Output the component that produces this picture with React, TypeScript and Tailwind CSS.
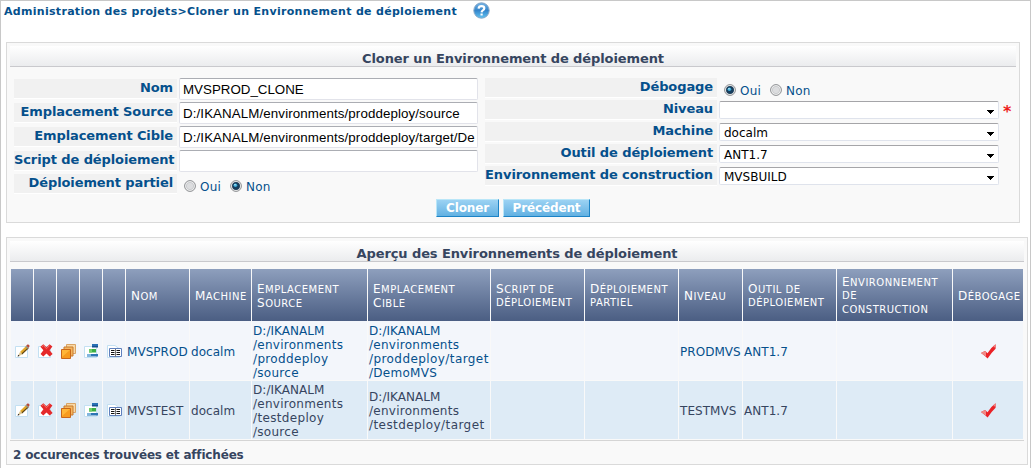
import React from "react";

type P = { children?: React.ReactNode; className?: string };

const Title = ({ children, className = "" }: P) => (
  <div className="h-[21px] border-b border-[#c9c9cd] bg-linear-to-b from-white to-[#ebecee] text-center text-[13px] leading-[25px] font-bold tracking-[-0.1px] text-[#36455f] whitespace-nowrap">
    <span className={className}>{children}</span>
  </div>
);

const Label = ({ children, className = "" }: P) => (
  <div className="h-5 shrink-0 border-b border-white bg-[#f1f1f1] pr-1 text-right text-[13px] leading-[17px] font-bold tracking-[-0.1px] text-[#05508c] whitespace-nowrap">
    <span className={className}>{children}</span>
  </div>
);

const Field = ({ children, className = "" }: P) => (
  <div className="h-[22px] w-[299px] shrink-0 overflow-hidden rounded-[2px] border border-[#e2e3ea] border-t-[#abadb3] bg-white pl-[3px] font-['Liberation_Sans',Arial,sans-serif] text-[13.33px] leading-[21px] text-black whitespace-nowrap">
    <span className={className}>{children}</span>
  </div>
);

const Select = ({ children, className = "" }: P) => (
  <div className="flex h-[18px] w-[280px] shrink-0 items-start justify-between rounded-[2px] border border-[#dfe3ec] border-t-[#a5a5a8] bg-white pl-1 text-[12px] leading-[18px] text-black whitespace-nowrap">
    <span className={className}>{children}</span>
    <svg width="7" height="4" className="mt-[8px] mr-[4px]" shapeRendering="crispEdges">
      <path d="M0 0H7V1H6V2H5V3H4V4H3V3H2V2H1V1H0Z" fill="#000" />
    </svg>
  </div>
);

const Radio = ({ on = false }: { on?: boolean }) => (
  <svg width="12" height="12" viewBox="0 0 12 12" className="shrink-0">
    <circle cx="6" cy="6" r="5.4" fill="#f6f6f6" stroke="#8b8d90" strokeWidth="1" />
    <circle cx="6" cy="6" r="3.7" fill={on ? "#173f5f" : "#dcdddf"} stroke={on ? "#12324c" : "#bfc1c4"} strokeWidth=".7" />
    {on && <circle cx="5.4" cy="5.2" r="1.8" fill="#3fb0dd" />}
    {on && <circle cx="5" cy="4.7" r=".8" fill="#c2eefa" />}
  </svg>
);

const Radios = ({ first }: { first: boolean }) => (
  <div className="flex items-center text-[12px] leading-[14px] tracking-[0.2px] text-[#05508c]">
    <Radio on={first} />
    <span className="mt-[3px] ml-1 w-[30px]">Oui</span>
    <Radio on={!first} />
    <span className="mt-[3px] ml-1">Non</span>
  </div>
);

const Button = ({ children, className = "" }: P) => (
  <button className={"h-[18px] border border-t-[#b9e6f8] border-r-[#1c83c6] border-b-[#1c83c6] border-l-[#b9e6f8] bg-linear-to-b from-[#9bd2f3] to-[#62b1e2] text-center text-[12px] leading-[17px] font-bold tracking-[-0.15px] text-white whitespace-nowrap " + className}>
    {children}
  </button>
);

const Page = () => <path d="M.5 2.5H12.5V13.5H.5Z" fill="#fff" stroke="#c3e0f2" />;

const icons = [
  <svg key="edit" width="15" height="15">
    <Page />
    <path d="M5 8L11.4 1.8L13.4 3.8L7 10Z" fill="#e3a92b" />
    <path d="M6.4 9.6L13 3.4L13.6 4.4L7.2 10.6Z" fill="#624610" />
    <path d="M11.2 1.8L12.4 .6Q13.6 .2 14.4 1.2L14.4 2.8L13.2 4Z" fill="#b8493a" />
    <path d="M10.4 2.7L11.4 1.8L13.4 3.8L12.4 4.7Z" fill="#8f9390" />
    <path d="M5 8L7.2 10.4L2.8 12.4Z" fill="#ddc590" />
    <path d="M2.6 12.6L3.2 10.8L4.6 12Z" fill="#222" />
  </svg>,
  <svg key="delete" width="15" height="15">
    <Page />
    <path d="M2.4 2.8L5.3 .2L8.5 3.2L11.6 .2L14.4 2.6L11.6 6.2L14.6 10L11.6 12.6L8.5 9.4L5.3 12.6L2.6 10L5.4 6.3Z" fill="#e5292a" />
    <path d="M3.8 2.8L5.4 1.6L8.5 4.7L11.5 1.6" fill="none" stroke="#f4766c" />
  </svg>,
  <svg key="clone" width="15" height="15">
    <path d="M5.5 .5H14.5V9.5H5.5Z" fill="#f9d9a6" stroke="#d9a566" />
    <path d="M3 3H12V12H3Z" fill="#f5b660" stroke="#c67a30" />
    <path d="M.5 5.5H9.5V14.5H.5Z" fill="#f79b1e" stroke="#c9671a" />
    <path d="M1 6H9L1 13Z" fill="#ffb638" />
  </svg>,
  <svg key="params" width="15" height="15">
    <Page />
    <path d="M8 0H14V3H8Z" fill="#2870b5" />
    <path d="M8 2H14V3.5H8Z" fill="#174f91" />
    <path d="M5 5H12V8.5H5Z" fill="#3aae45" />
    <path d="M5 5H8V8.5H5Z" fill="#71cd69" />
    <path d="M3 10H14V12.5H3Z" fill="#2c75b4" />
    <path d="M3 10H7V12.5H3Z" fill="#80b6df" />
  </svg>,
  <svg key="history" width="15" height="15">
    <path d="M.5 1.5H8L12.5 5V13.5H.5Z" fill="#fff" stroke="#c3e0f2" />
    <path d="M2.5 4.5H14.5V12.5H2.5Z" fill="#fff" stroke="#5f80bd" />
    <path d="M4 6.5H7.5M4 8.5H7.5M4 10.5H7.5M9.5 6.5H13M9.5 8.5H13M9.5 10.5H13" stroke="#111" />
    <path d="M8.5 5V13" stroke="#777" />
  </svg>,
];

const Check = () => (
  <svg width="15" height="15" viewBox="0 0 15 15">
    <path d="M0 9L4 7L6.5 9.2Q9.5 4 14.6 .3V4.8Q10.5 8.6 6.6 14.6Q3.5 11.4 0 9Z" fill="#ea2227" />
    <path d="M0 9L4 7L5 8V12.8Q2.5 10.6 0 9Z" fill="#f08a86" />
    <path d="M12.6 1.8L14.6 .3V3L12.8 3.6Z" fill="#ef8583" />
  </svg>
);

const columns = "grid grid-cols-[22px_22px_22px_22px_22px_63px_61px_115px_122px_93px_93px_63px_93px_115px_70px] gap-x-px";

const headers: [string, string?][][] = [
  [["Nom"]],
  [["Machine"]],
  [["Emplacement"], ["Source"]],
  [["Emplacement"], ["Cible"]],
  [["Script de"], ["déploiement", "small"]],
  [["Déploiement"], ["partiel", "small"]],
  [["Niveau"]],
  [["Outil de"], ["déploiement", "small"]],
  [["Environnement"], ["de", "small"], ["construction", "small"]],
  [["Débogage"]],
];

const rows = [
  {
    style: "h-[59px] text-[#05508c]",
    cell: "bg-[#f3f6fb]",
    pad: "pt-[3px]",
    iconPad: "pt-[2px]",
    data: [["MVSPROD"], ["docalm"], ["D:/IKANALM", "/environments", "/proddeploy", "/source"], ["D:/IKANALM", "/environments", "/proddeploy/target", "/DemoMVS"], [], [], ["PRODMVS"], ["ANT1.7"], []],
  },
  {
    style: "mt-px h-[58px] text-[#36455f]",
    cell: "bg-[#deebf6]",
    pad: "pt-[2px]",
    iconPad: "pt-px",
    data: [["MVSTEST"], ["docalm"], ["D:/IKANALM", "/environments", "/testdeploy", "/source"], ["D:/IKANALM", "/environments", "/testdeploy/target"], [], [], ["TESTMVS"], ["ANT1.7"], []],
  },
];

const tracking = (line: string) =>
  line.endsWith("/target") ? "tracking-[0.42px]" : line === "/proddeploy" || line === "/testdeploy" ? "tracking-[0.34px]" : line.startsWith("/") ? "tracking-[0.27px]" : "tracking-[0.05px]";

export default function App() {
  return (
    <div className="h-[468px] w-[1031px] overflow-hidden border-t border-r border-l border-[#c8c8c8] bg-white pl-[5px] font-['DejaVu_Sans',Verdana,sans-serif]">
      <div className="-ml-0.5 flex h-[41px] items-start text-[11px] font-bold text-[#05508c] whitespace-nowrap">
        <span className="w-[469px] leading-[22px] tracking-[0.3px]">Administration des projets&gt;Cloner un Environnement de déploiement</span>
        <svg width="17" height="17" viewBox="0 0 17 17" className="mt-px">
          <defs>
            <linearGradient id="help" x1="0" y1="0" x2="0" y2="1">
              <stop offset="0" stopColor="#75b4e6" />
              <stop offset=".5" stopColor="#3485cb" />
              <stop offset="1" stopColor="#62c4f2" />
            </linearGradient>
          </defs>
          <circle cx="8.5" cy="8.5" r="7.7" fill="url(#help)" stroke="#84a5c6" />
          <path d="M5.6 6.6Q5.8 4.2 8.5 4.2Q11.3 4.2 11.3 6.3Q11.3 7.5 9.8 8.4Q8.7 9 8.6 10.3M8.6 11.5V13.5" fill="none" stroke="#fff" strokeWidth="2.2" />
        </svg>
      </div>

      <div className="h-[181px] w-[1014px] border border-[#dadada] bg-[#f9f9f9] p-[3px]">
        <Title>Cloner un Environnement de déploiement</Title>
        <div className="flex pl-1">
          <div className="grid h-[129px] grid-cols-[163px_299px] content-start gap-x-[2px] pt-[11px]">
            <div className="flex flex-col gap-1 pt-px">
              <Label>Nom</Label>
              <Label>Emplacement Source</Label>
              <Label>Emplacement Cible</Label>
              <Label>Script de déploiement</Label>
              <div className="-mt-px"><Label>Déploiement partiel</Label></div>
            </div>
            <div className="flex flex-col gap-0.5">
              <Field>MVSPROD_CLONE</Field>
              <Field className="tracking-[0.1px]">D:/IKANALM/environments/proddeploy/source</Field>
              <Field className="tracking-[0.1px]">D:/IKANALM/environments/proddeploy/target/De</Field>
              <Field />
              <div className="pt-[3px] pl-[5px]"><Radios first={false} /></div>
            </div>
          </div>
          <div className="ml-[7px] grid grid-cols-[232px_280px_20px] content-start gap-x-[2px] pt-[11px]">
            <div className="flex flex-col gap-0.5">
              <Label>Débogage</Label>
              <Label>Niveau</Label>
              <Label>Machine</Label>
              <Label>Outil de déploiement</Label>
              <Label>Environnement de construction</Label>
            </div>
            <div className="flex flex-col gap-1">
              <div className="h-[19px] pt-[3px] pl-[5px]"><Radios first /></div>
              <Select />
              <Select>docalm</Select>
              <Select>ANT1.7</Select>
              <Select>MVSBUILD</Select>
            </div>
            <div className="pt-[24px] pl-[2px] text-[16px] leading-[20px] font-bold text-[#ee1c1c]">*</div>
          </div>
        </div>
        <div className="mt-[3px] flex gap-1 pl-[426px]">
          <Button className="w-[63px]">Cloner</Button>
          <Button className="w-[87px]">Précédent</Button>
        </div>
      </div>

      <div className="mt-[14px] h-[228px] w-[1022px] border border-[#dadada] bg-[#f9f9f9] p-[3px] text-[12px] leading-[14px]">
        <Title>Aperçu des Environnements de déploiement</Title>
        <div className="mt-[7px] border-b border-[#d5d5d5] px-px pb-px">
          <div className={columns + " h-[52px] text-white"}>
            {icons.map((_, i) => (
              <div key={i} className="bg-linear-to-b from-[#8e9fbd] to-[#4b5e83]" />
            ))}
            {headers.map((lines, i) => (
              <div key={i} className="flex flex-col justify-center bg-linear-to-b from-[#8e9fbd] to-[#4b5e83] pt-px pl-[5px] whitespace-nowrap">
                {lines.map(([text, small]) => (
                  <div key={text} className={"h-[14px] text-[10px] leading-[14px] tracking-[0.5px] uppercase " + (small ? "" : "first-letter:text-[12px]")}>{text}</div>
                ))}
              </div>
            ))}
          </div>
          {rows.map((row, r) => (
            <div key={r} className={columns + " " + row.style}>
              {icons.map((icon, i) => (
                <div key={i} className={"flex items-center pl-1 " + row.iconPad + " " + row.cell}>{icon}</div>
              ))}
              {row.data.map((lines, i) => (
                <div key={i} className={"flex flex-col justify-center pl-px whitespace-nowrap " + row.pad + " " + row.cell}>
                  {lines.map((l) => (
                    <span key={l} className={tracking(l)}>{l}</span>
                  ))}
                </div>
              ))}
              <div className={"flex items-center justify-center " + row.iconPad + " " + row.cell}><Check /></div>
            </div>
          ))}
        </div>
        <div className="pt-[7px] pl-[3px] text-[12px] font-bold tracking-[-0.17px] text-[#36455f]">2 occurences trouvées et affichées</div>
      </div>
    </div>
  );
}
